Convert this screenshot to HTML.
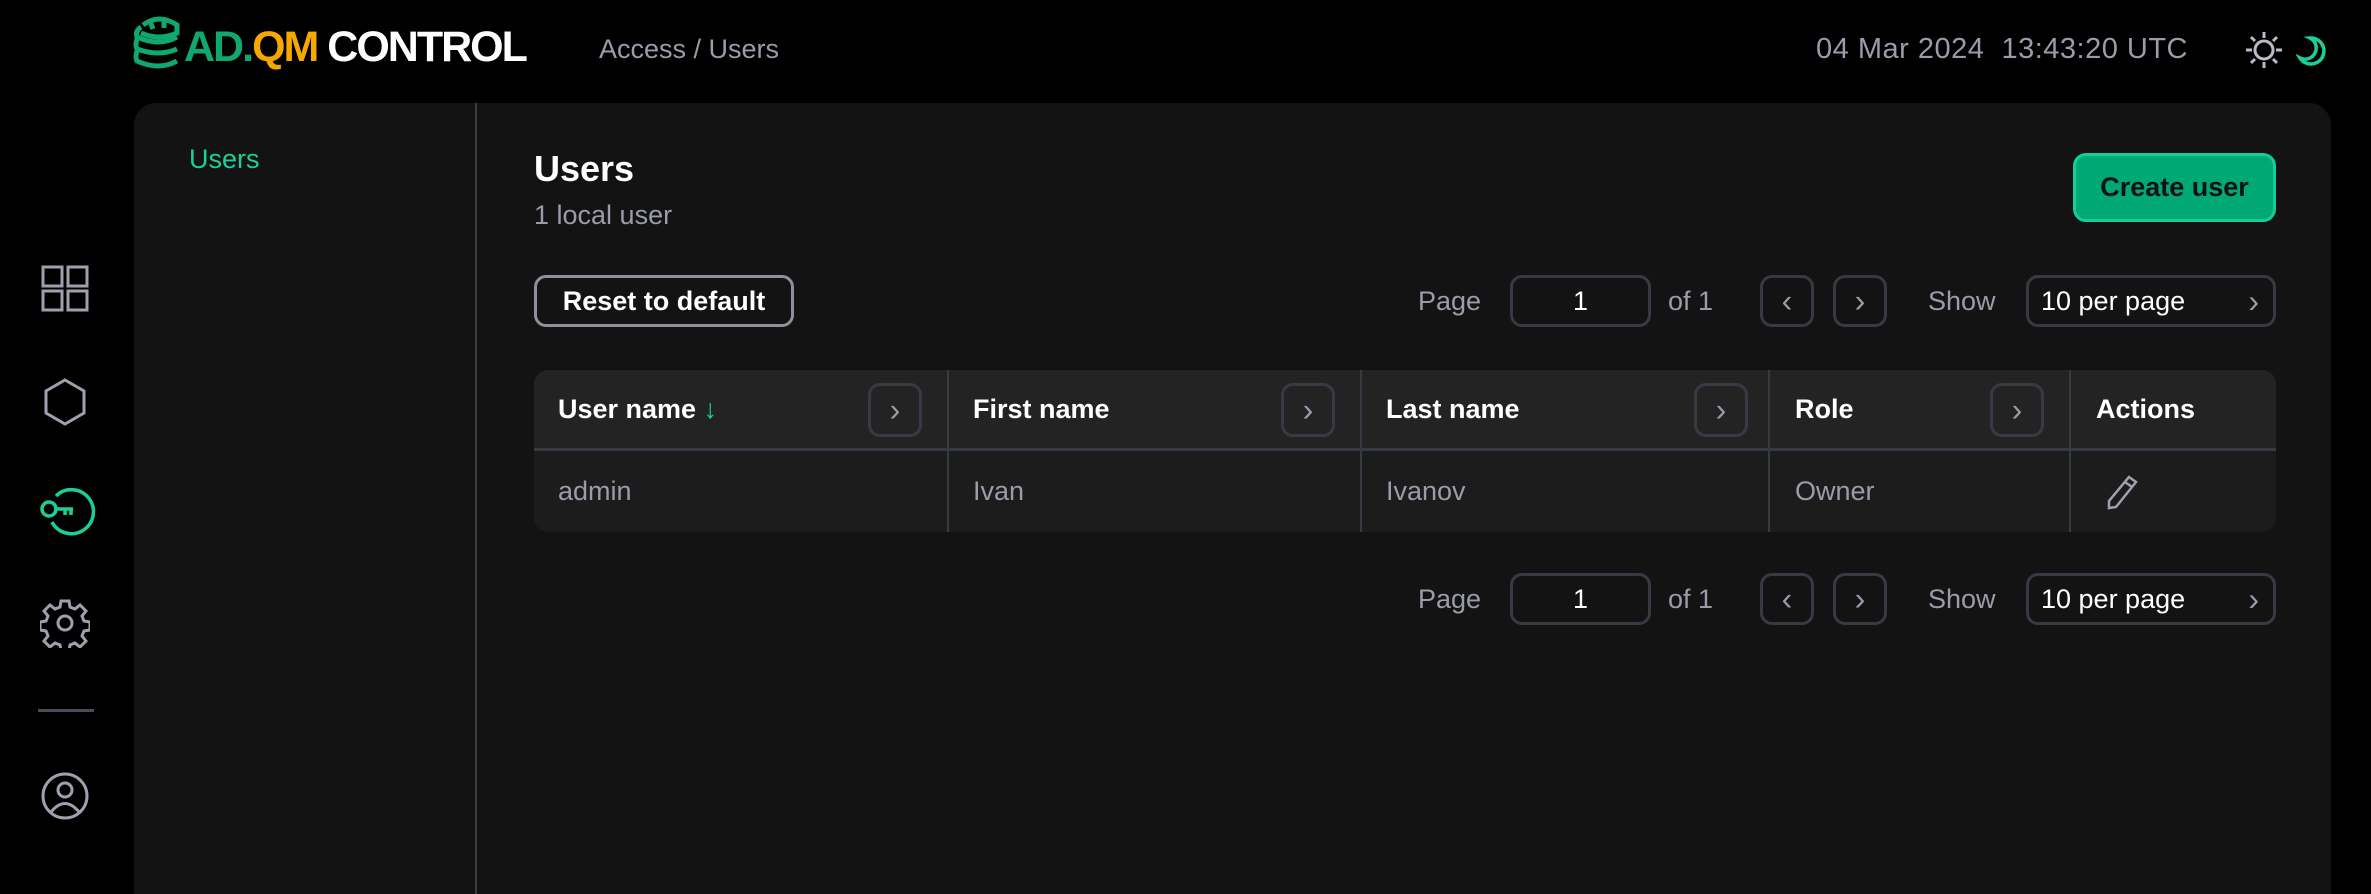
<!DOCTYPE html>
<html><head><meta charset="utf-8"><style>
*{margin:0;padding:0;box-sizing:border-box}
html,body{width:2371px;height:894px;overflow:hidden}
body{background:#000;font-family:"Liberation Sans",sans-serif;position:relative;color:#fff}
.a{position:absolute}
.t{font-size:27px;line-height:1}
.g{color:#9a9caa}
.btn{position:absolute;border:3px solid #363b43;border-radius:12px}
.chev{position:absolute;left:50%;top:50%;transform:translate(-50%,-52%);font-size:32px;line-height:1;color:#9a9caa}
.panel{left:134px;top:103px;width:2197px;height:791px;background:#131313;border-radius:22px 22px 0 0}
.th{position:absolute;top:396px;font-size:27px;font-weight:bold;line-height:1}
.td{position:absolute;top:478px;font-size:27px;color:#9a9caa;line-height:1}
</style></head><body>
<svg class="a" style="left:133px;top:15px" width="52" height="56" viewBox="0 0 52 56" fill="none" stroke="#10a870" stroke-width="5">
<path d="M10 10 Q26 -2 44 10 L44 18 Q26 26 8 18"/><path d="M17 6 L20 14 M31 4 L31 13"/>
<path d="M8 12 Q2 16 4 22 Q26 32 44 22"/><path d="M4 24 Q2 30 4 34 Q26 42 44 34"/><path d="M4 36 Q2 42 4 46 Q26 56 44 46"/>
</svg>
<div class="a" style="left:184px;top:26px;font-size:43px;font-weight:bold;letter-spacing:-2px;line-height:1"><span style="color:#10a870">AD.</span><span style="color:#f5a800">QM</span> <span style="color:#fff">CONTROL</span></div>
<div class="a t g" style="left:599px;top:36px">Access / Users</div>
<div class="a g" style="left:1816px;top:35px;font-size:29px;line-height:1;letter-spacing:0.5px">04 Mar 2024 &nbsp;13:43:20 UTC</div>
<svg class="a" style="left:2244px;top:30px" width="40" height="40" viewBox="0 0 40 40" fill="none" stroke="#b9bbc6" stroke-width="3"><circle cx="20" cy="20" r="9"/><path d="M20 2v6M20 32v6M2 20h6M32 20h6M7 7l4 4M29 29l4 4M7 33l4-4M29 11l4-4"/></svg>
<svg class="a" style="left:2296px;top:34px" width="30" height="34" viewBox="0 0 30 34" fill="none" stroke="#1ccf9a" stroke-width="3.5"><path d="M14 4 A13 13 0 1 1 4 24 A10 10 0 0 0 14 4z"/></svg>
<svg class="a" style="left:41px;top:265px" width="48" height="48" viewBox="0 0 48 48" fill="none" stroke="#9fa0ad" stroke-width="3"><rect x="2" y="2" width="19" height="19"/><rect x="27" y="2" width="19" height="19"/><rect x="2" y="26" width="19" height="19"/><rect x="27" y="26" width="19" height="19"/></svg>
<svg class="a" style="left:43px;top:377px" width="44" height="50" viewBox="0 0 44 50" fill="none" stroke="#9fa0ad" stroke-width="3"><path d="M22 3L41 14V36L22 47L3 36V14Z"/></svg>
<svg class="a" style="left:38px;top:486px" width="58" height="50" viewBox="0 0 58 50" fill="none" stroke="#1ccf9a" stroke-width="3.5"><path d="M18 10 A22 22 0 1 1 14 36"/><circle cx="11" cy="23" r="7"/><path d="M18 23H35M27 23v6M33 23v6"/></svg>
<svg class="a" style="left:40px;top:598px" width="50" height="50" viewBox="0 0 50 50" fill="none" stroke="#9fa0ad" stroke-width="3"><path d="M21 3h8l1 6 5 2 5-4 6 6-4 5 2 5 6 1v8l-6 1-2 5 4 5-6 6-5-4-5 2-1 6h-8l-1-6-5-2-5 4-6-6 4-5-2-5-6-1v-8l6-1 2-5-4-5 6-6 5 4 5-2z"/><circle cx="25" cy="25" r="7"/></svg>
<div class="a" style="left:38px;top:709px;width:56px;height:3px;background:#4a4d57"></div>
<svg class="a" style="left:40px;top:771px" width="50" height="50" viewBox="0 0 50 50" fill="none" stroke="#9fa0ad" stroke-width="3"><circle cx="25" cy="25" r="22"/><circle cx="25" cy="19" r="7"/><path d="M11 41 Q25 24 39 41"/></svg>
<div class="a panel"></div>
<div class="a" style="left:475px;top:103px;width:2px;height:791px;background:#3a3d45"></div>
<div class="a t" style="left:189px;top:146px;color:#1ccf9a">Users</div>
<div class="a" style="left:534px;top:151px;font-size:36px;font-weight:bold;line-height:1">Users</div>
<div class="a t g" style="left:534px;top:202px">1 local user</div>
<div class="a" style="left:2073px;top:153px;width:203px;height:69px;background:#00a874;border:3px solid #12cf98;border-radius:13px;color:#111;font-size:27px;font-weight:bold;text-align:center;line-height:63px">Create user</div>
<div class="a" style="left:534px;top:275px;width:260px;height:52px;border:3px solid #8f909b;border-radius:12px;font-size:27px;font-weight:bold;text-align:center;line-height:46px">Reset to default</div>

<div class="a t g" style="left:1418px;top:288px">Page</div>
<div class="btn" style="left:1510px;top:275px;width:141px;height:52px;text-align:center;line-height:46px;font-size:27px">1</div>
<div class="a t g" style="left:1668px;top:288px">of 1</div>
<div class="btn" style="left:1760px;top:275px;width:54px;height:52px"><span class="chev">‹</span></div>
<div class="btn" style="left:1833px;top:275px;width:54px;height:52px"><span class="chev">›</span></div>
<div class="a t g" style="left:1928px;top:288px">Show</div>
<div class="btn" style="left:2026px;top:275px;width:250px;height:52px;font-size:27px;line-height:46px;padding-left:12px">10 per page<span style="position:absolute;right:14px;color:#9a9caa;font-size:32px">›</span></div>

<div class="a t g" style="left:1418px;top:586px">Page</div>
<div class="btn" style="left:1510px;top:573px;width:141px;height:52px;text-align:center;line-height:46px;font-size:27px">1</div>
<div class="a t g" style="left:1668px;top:586px">of 1</div>
<div class="btn" style="left:1760px;top:573px;width:54px;height:52px"><span class="chev">‹</span></div>
<div class="btn" style="left:1833px;top:573px;width:54px;height:52px"><span class="chev">›</span></div>
<div class="a t g" style="left:1928px;top:586px">Show</div>
<div class="btn" style="left:2026px;top:573px;width:250px;height:52px;font-size:27px;line-height:46px;padding-left:12px">10 per page<span style="position:absolute;right:14px;color:#9a9caa;font-size:32px">›</span></div>

<div class="a" style="left:534px;top:370px;width:1742px;height:162px;background:#1c1c1d;border-radius:14px;overflow:hidden">
 <div style="height:81px;background:#232323;border-bottom:3px solid #363b43"></div>
</div>
<div class="a" style="left:947px;top:370px;width:2px;height:162px;background:#363b43"></div>
<div class="a" style="left:1360px;top:370px;width:2px;height:162px;background:#363b43"></div>
<div class="a" style="left:1768px;top:370px;width:2px;height:162px;background:#363b43"></div>
<div class="a" style="left:2069px;top:370px;width:2px;height:162px;background:#363b43"></div>
<div class="th" style="left:558px">User name <span style="color:#1ccf9a;font-weight:normal">↓</span></div>
<div class="th" style="left:973px">First name</div>
<div class="th" style="left:1386px">Last name</div>
<div class="th" style="left:1795px">Role</div>
<div class="th" style="left:2096px">Actions</div>
<div class="btn" style="left:868px;top:383px;width:54px;height:54px"><span class="chev">›</span></div>
<div class="btn" style="left:1281px;top:383px;width:54px;height:54px"><span class="chev">›</span></div>
<div class="btn" style="left:1694px;top:383px;width:54px;height:54px"><span class="chev">›</span></div>
<div class="btn" style="left:1990px;top:383px;width:54px;height:54px"><span class="chev">›</span></div>
<div class="td" style="left:558px">admin</div>
<div class="td" style="left:973px">Ivan</div>
<div class="td" style="left:1386px">Ivanov</div>
<div class="td" style="left:1795px">Owner</div>
<svg class="a" style="left:2105px;top:474px" width="34" height="36" viewBox="0 0 34 36" fill="none" stroke="#9fa0ad" stroke-width="2.5"><path d="M24 3l7 5L11 33l-7 1 0-7z M20 8l7 5"/></svg>
</body></html>
